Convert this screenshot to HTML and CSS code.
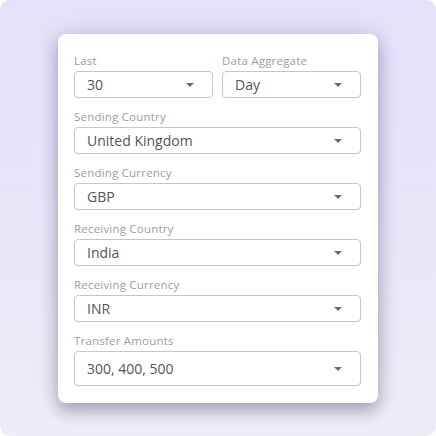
FILE: index.html
```html
<!DOCTYPE html>
<html>
<head>
<meta charset="utf-8">
<link rel="stylesheet" href="styles.css">
</head>
<body>
<div class="stage">
  <div class="card">
    <div class="row two">
      <div class="field">
        <div class="label">Last</div>
        <div class="select"><span class="value">30</span><span class="caret"></span></div>
      </div>
      <div class="field">
        <div class="label">Data Aggregate</div>
        <div class="select"><span class="value">Day</span><span class="caret"></span></div>
      </div>
    </div>
    <div class="field">
      <div class="label">Sending Country</div>
      <div class="select"><span class="value">United Kingdom</span><span class="caret"></span></div>
    </div>
    <div class="field">
      <div class="label">Sending Currency</div>
      <div class="select"><span class="value">GBP</span><span class="caret"></span></div>
    </div>
    <div class="field">
      <div class="label">Receiving Country</div>
      <div class="select"><span class="value">India</span><span class="caret"></span></div>
    </div>
    <div class="field">
      <div class="label">Receiving Currency</div>
      <div class="select"><span class="value">INR</span><span class="caret"></span></div>
    </div>
    <div class="field">
      <div class="label">Transfer Amounts</div>
      <div class="select tall"><span class="value">300, 400, 500</span><span class="caret"></span></div>
    </div>
  </div>
</div>
</body>
</html>
```
FILE: styles.css
```css
html, body {
  margin: 0;
  padding: 0;
  background: #ffffff;
}
body {
  font-family: "Open Sans", "Noto Sans", sans-serif;
}
.stage {
  width: 436px;
  height: 436px;
  box-sizing: border-box;
  border-radius: 10px;
  background: linear-gradient(180deg, #e6e0fa 0%, #e9e5f8 55%, #eeecf5 100%);
  padding: 34px 0 0 58px;
}
.card {
  width: 320px;
  box-sizing: border-box;
  background: #ffffff;
  border-radius: 8px;
  padding: 19px 17px 17px 16px;
  display: flex;
  flex-direction: column;
  gap: 11px;
  box-shadow: 0 8px 16px rgba(45, 38, 75, 0.32), 0 0 22px rgba(70, 60, 120, 0.14);
}
.row.two {
  display: grid;
  grid-template-columns: 1fr 1fr;
  gap: 9px;
}
.field {
  display: flex;
  flex-direction: column;
}
.label {
  font-size: 11.5px;
  line-height: 16px;
  color: #9d9d9d;
  letter-spacing: 0.2px;
  margin-bottom: 2px;
}
.select {
  height: 27px;
  box-sizing: border-box;
  border: 1px solid #c6c6c6;
  border-radius: 4px;
  display: flex;
  align-items: center;
  justify-content: space-between;
  padding: 0 18px 0 12px;
}
.select.tall {
  height: 35px;
}
.value {
  font-size: 14px;
  color: #555555;
  line-height: 18px;
}
.caret {
  width: 0;
  height: 0;
  border-left: 4.5px solid transparent;
  border-right: 4.5px solid transparent;
  border-top: 4.5px solid #6b6b6b;
}
```
